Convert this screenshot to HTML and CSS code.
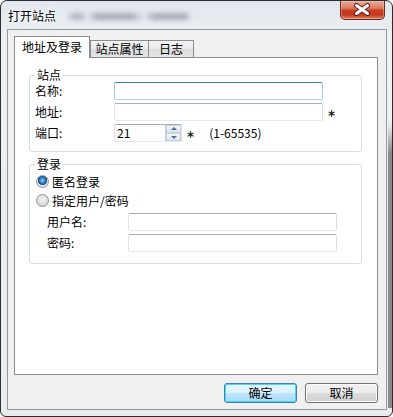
FILE: index.html
```html
<!DOCTYPE html>
<html lang="zh-CN">
<head>
  <meta charset="UTF-8" />
  <title>打开站点</title>
  <link rel="stylesheet" href="styles.css">
</head>
<body>

<div class="window">
  <div class="titlebar">
    <span class="title">打开站点</span>
    <span class="haze"></span>
    <div class="close">
      <svg width="45" height="19" viewBox="0 0 45 19">
        <path d="M16.5 5.5 L27.5 13.5 M27.5 5.5 L16.5 13.5" stroke="#5b2218" stroke-width="5" stroke-linecap="round" fill="none"/>
        <path d="M16.5 5.5 L27.5 13.5 M27.5 5.5 L16.5 13.5" stroke="#ffffff" stroke-width="3" stroke-linecap="round" fill="none"/>
      </svg>
    </div>
  </div>

  <div class="client">
    <div class="tabs">
      <div class="tab active">地址及登录</div>
      <div class="tab tab-site">站点属性</div>
      <div class="tab tab-log">日志</div>
    </div>

    <div class="panel">
      <fieldset class="group site">
        <legend>站点</legend>
        <div class="site-form">
          <span>名称:</span>
          <input class="field focus" type="text">
          <span></span>

          <span>地址:</span>
          <input class="field" type="text">
          <span class="mark">∗</span>

          <span>端口:</span>
          <div class="port-row">
            <div class="spinner">
              <span class="spin-value">21</span>
              <div class="spin-buttons">
                <span class="spin up"></span>
                <span class="spin down"></span>
              </div>
            </div>
            <span class="mark">∗</span>
            <span class="range">(1-65535)</span>
          </div>
        </div>
      </fieldset>

      <fieldset class="group login">
        <legend>登录</legend>
        <div class="radios">
          <label class="radio-row"><span class="radio checked"></span>匿名登录</label>
          <label class="radio-row"><span class="radio"></span>指定用户/密码</label>
        </div>
        <div class="user-form">
          <span>用户名:</span>
          <input class="field" type="text">
          <span>密码:</span>
          <input class="field" type="text">
        </div>
      </fieldset>
    </div>

    <div class="footer">
      <div class="btn default">确定</div>
      <div class="btn">取消</div>
    </div>
  </div>
</div>

</body>
</html>
```

FILE: styles.css
```css
* {
  box-sizing: border-box;
}

body {
  margin: 0;
  width: 393px;
  height: 417px;
  background: #fff;
  font-family: "Noto Sans CJK SC", "DejaVu Sans", sans-serif;
  font-size: 12px;
  line-height: 14px;
  color: #000;
}

.window {
  width: 393px;
  height: 417px;
  border: 1px solid #2b2f33;
  border-radius: 7px 7px 6px 6px;
  padding: 0 5px 6px 6px;
  display: flex;
  flex-direction: column;
  background:
    linear-gradient(rgba(120, 120, 120, 0), #8a8a8a 30px, #8a8a8a) right 0 bottom 8px / 4px 285px no-repeat,
    linear-gradient(#e1e7ee, #eef1f4 40px, #e9ecef);
}

.titlebar {
  height: 28px;
  display: flex;
  align-items: flex-start;
}

.title {
  padding: 8px 0 0 1px;
  text-shadow: 0 0 6px #fff, 0 0 4px #fff;
}

.haze {
  width: 125px;
  height: 7px;
  margin: 12px 0 0 10px;
  background: linear-gradient(to right, transparent 0, #8a9096 8px, #8a9096 14px, transparent 22px, #7d838a 30px, #7d838a 66px, transparent 78px, #7d838a 88px, #7d838a 120px, transparent 125px);
  filter: blur(2.5px);
  opacity: 0.6;
}

.close {
  margin-left: auto;
  margin-right: 2px;
  width: 45px;
  height: 19px;
  border: 1px solid #6a2a1e;
  border-top: none;
  border-radius: 0 0 5px 5px;
  background: linear-gradient(#e9ab98, #dc7a5e 40%, #c63d20 52%, #c5391d 78%, #e08a6c);
  box-shadow: inset 0 0 0 1px rgba(255, 220, 200, 0.35);
  overflow: hidden;
}

.close svg {
  display: block;
  margin: -1px 0 0 -1px;
}

.client {
  flex: 1;
  border: 1px solid #8e99a5;
  background: #f0f0f0;
  padding: 6px 8px 0 6px;
  display: flex;
  flex-direction: column;
}

.tabs {
  height: 21px;
  display: flex;
  align-items: flex-end;
}

.tab {
  height: 17px;
  border: 1px solid #898c95;
  border-bottom: none;
  background: linear-gradient(#f3f3f3, #ebebeb 50%, #dddddd 51%, #e4e4e4);
  text-align: center;
  padding-top: 1px;
}

.tab.active {
  width: 76px;
  height: 22px;
  margin-bottom: -1px;
  padding-top: 3px;
  background: #fff;
  position: relative;
  z-index: 1;
}

.tab-site {
  width: 59px;
}

.tab-log {
  width: 46px;
  margin-left: -1px;
}

.panel {
  height: 318px;
  border: 1px solid #898c95;
  background: #fff;
  padding: 0 15px 0 14px;
}

.group {
  margin: 0;
  padding: 0;
  min-width: 0;
  border: 1px solid #d5dfe5;
  border-radius: 3px;
}

.group legend {
  margin-left: 5px;
  padding: 0 2px;
  line-height: 14px;
}

.site {
  margin-top: 10px;
}

.login {
  margin-top: 5px;
}

.site-form {
  display: grid;
  grid-template-columns: 79px 209px 1fr;
  grid-auto-rows: 18px;
  row-gap: 3px;
  align-items: center;
  padding: 0 0 9px 5px;
}

.field {
  display: block;
  width: 209px;
  height: 18px;
  margin: 0;
  padding: 0 2px;
  border: 1px solid;
  border-color: #abadb3 #dbdfe6 #e3e9ef #e2e3ea;
  border-radius: 2px;
  background: #fff;
  font: inherit;
  outline: none;
}

.field.focus {
  border-color: #3d7bad #a4c9e3 #b5cfe7 #a4c9e3;
}

.mark {
  padding: 3px 0 0 4px;
  font-family: "DejaVu Sans", sans-serif;
  font-size: 11px;
}

.port-row {
  grid-column: 2 / 4;
  display: flex;
  align-items: center;
  height: 18px;
}

.spinner {
  width: 68px;
  height: 18px;
  display: flex;
  border: 1px solid;
  border-color: #abadb3 #dbdfe6 #e3e9ef #e2e3ea;
  border-radius: 2px;
  background: #fff;
}

.spin-value {
  flex: 1;
  padding-left: 2px;
  line-height: 16px;
}

.spin-buttons {
  width: 16px;
  display: flex;
  flex-direction: column;
  border-left: 1px solid #c4ccd6;
}

.spin {
  flex: 1;
  position: relative;
  background: linear-gradient(#f4f7fa, #dde4ec);
  border: 1px solid #c9d3de;
}

.spin::after {
  content: "";
  position: absolute;
  left: 4px;
  border-left: 3px solid transparent;
  border-right: 3px solid transparent;
}

.spin.up::after {
  top: 1px;
  border-bottom: 3px solid #4c6f98;
}

.spin.down::after {
  top: 2px;
  border-top: 3px solid #4c6f98;
}

.range {
  margin-left: 14px;
}

.radios {
  padding: 1px 0 0 6px;
}

.radio-row {
  height: 19px;
  display: flex;
  align-items: center;
  gap: 3px;
}

.radio {
  width: 13px;
  height: 13px;
  border-radius: 50%;
  border: 1px solid #8f9396;
  background: radial-gradient(circle at 50% 40%, #f4f4f4 0, #dcdcdc 60%, #c9c9c9 100%);
}

.radio.checked {
  background:
    radial-gradient(circle at 50% 40%, #9fd3f7 0, #2e7fc7 30%, #1b4f8e 52%, transparent 56%),
    radial-gradient(circle, #f4f4f4 0, #dcdcdc 100%);
}

.user-form {
  display: grid;
  grid-template-columns: 81px 209px;
  grid-auto-rows: 18px;
  row-gap: 3px;
  align-items: center;
  padding: 3px 0 11px 17px;
}

.footer {
  display: flex;
  justify-content: flex-end;
  gap: 8px;
  margin-top: 8px;
}

.btn {
  width: 73px;
  height: 20px;
  border: 1px solid #707070;
  border-radius: 3px;
  background: linear-gradient(#f2f2f2, #ebebeb 50%, #dddddd 51%, #cfcfcf);
  box-shadow: inset 0 0 0 1px #fcfcfc;
  text-align: center;
  line-height: 18px;
}

.btn.default {
  border-color: #3c7fb1;
  background: linear-gradient(#eaf6fd, #d9f0fc 50%, #bee6fd 51%, #a7d9f5);
  box-shadow: inset 0 0 0 1px #48d8fb;
}
```
